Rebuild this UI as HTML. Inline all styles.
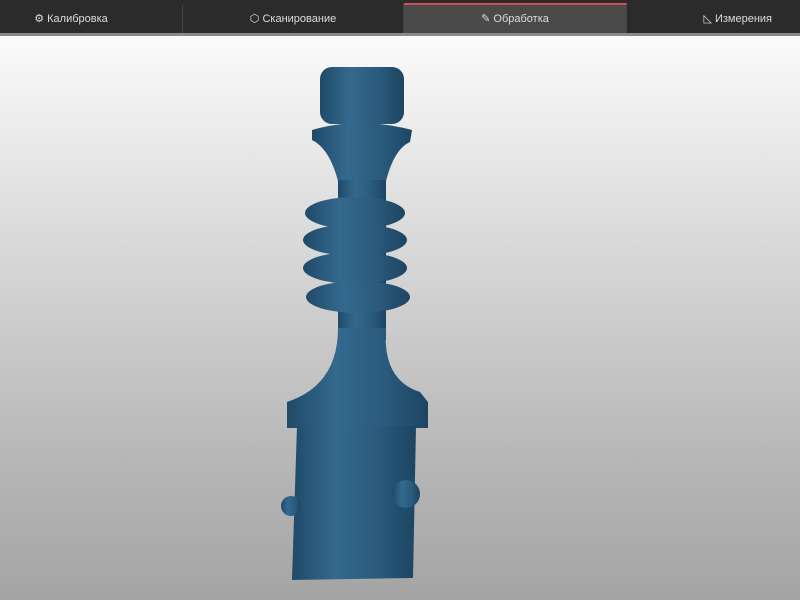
<!DOCTYPE html><html><head><meta charset="utf-8"><style>
body{margin:0;width:800px;height:600px;overflow:hidden;font-family:"Liberation Sans",sans-serif;background:linear-gradient(#fafafa 40px,#e0e0e0 200px,#b8b8b8 450px,#a4a4a4 600px);position:relative}
.bar{position:absolute;top:0;left:0;width:800px;height:33px;background:#2b2b2b;border-bottom:3px solid #8a8a8a}
.tab{position:absolute;top:5px;height:28px;color:#ddd;font-size:11px;line-height:28px;text-align:center;border-right:1px solid #444}
.act{background:#4a4a4a;border-top:2px solid #d05050;top:3px}
</style></head><body>
<div class="bar">
<div class="tab" style="left:0;width:142px;border:0">⚙ Калибровка</div>
<div class="tab" style="left:0;width:182px;color:transparent">.</div>
<div class="tab" style="left:183px;width:220px">⬡ Сканирование</div>
<div class="tab act" style="left:404px;width:222px">✎ Обработка</div>
<div class="tab" style="left:627px;width:173px;border:0;text-align:right;padding-right:28px;box-sizing:border-box">◺ Измерения</div>
</div>
<svg width="800" height="600" style="position:absolute;left:0;top:0">
<defs><linearGradient id="g" x1="0" x2="1"><stop offset="0" stop-color="#1f4a68"/><stop offset=".35" stop-color="#34698e"/><stop offset=".7" stop-color="#2a5a7c"/><stop offset="1" stop-color="#1d4562"/></linearGradient></defs>
<g fill="url(#g)">
<rect x="320" y="67" width="84" height="57" rx="12"/>
<path d="M312 130 Q360 116 412 130 L410 142 Q392 150 384 190 L340 190 Q332 150 312 140Z"/>
<rect x="338" y="180" width="48" height="160"/>
<ellipse cx="355" cy="213" rx="50" ry="16"/>
<ellipse cx="355" cy="240" rx="52" ry="16"/>
<ellipse cx="355" cy="268" rx="52" ry="16"/>
<ellipse cx="358" cy="297" rx="52" ry="16"/>
<path d="M338 328 L386 328 Q382 380 420 392 L428 402 L428 422 L287 422 L287 402 Q338 385 338 328Z"/>
<path d="M287 412 L428 412 L428 428 L287 428Z"/>
<path d="M297 426 L416 426 L413 578 L292 580Z"/>
<ellipse cx="406" cy="494" rx="14" ry="14"/>
<ellipse cx="291" cy="506" rx="10" ry="10"/>
</g>
</svg>
</body></html>
